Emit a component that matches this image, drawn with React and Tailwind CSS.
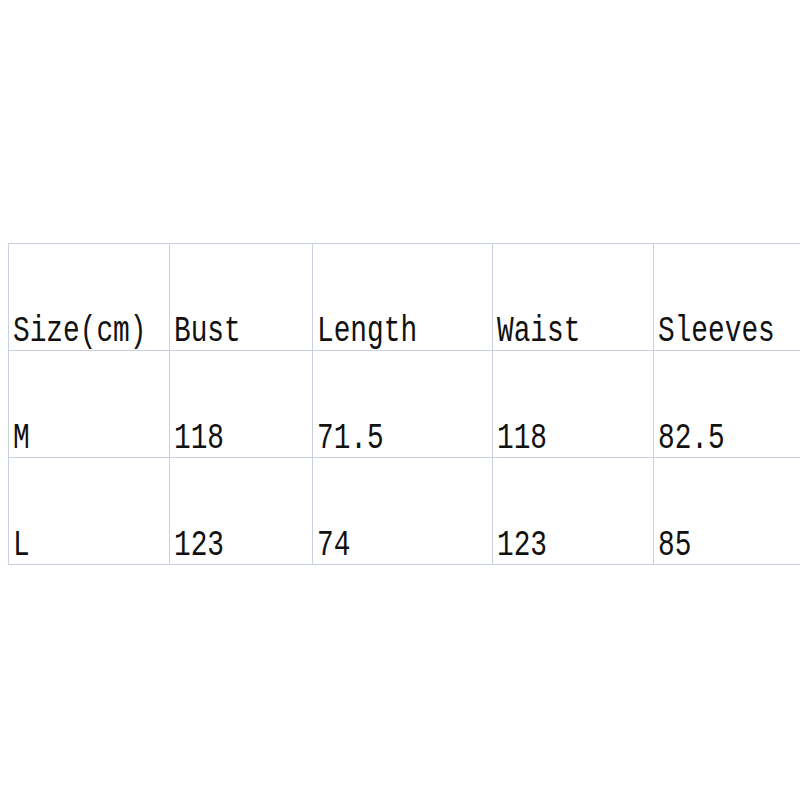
const columns = [161, 143, 180, 161, 160];

const rows = [
    ["Size(cm)", "Bust", "Length", "Waist", "Sleeves"],
    ["M", "118", "71.5", "118", "82.5"],
    ["L", "123", "74", "123", "85"],
];

const Cell = ({ text }) => (
    <td className="border border-[#c8d0e2] align-bottom p-0 pl-[4px]">
        <span className="inline-block origin-bottom translate-y-[1px] scale-y-[1.36] leading-none text-[27.8px] text-[#111]">
            {text}
        </span>
    </td>
);

export default function App() {
    return (
        <div
            className="w-[800px] h-[800px] bg-white overflow-hidden pt-[243px] pl-[8px]"
            style={{ fontFamily: '"Liberation Mono", monospace' }}
        >
            <table className="border-collapse table-fixed w-[805px]">
                <colgroup>
                    {columns.map((w, i) => (
                        <col key={i} style={{ width: w }} />
                    ))}
                </colgroup>
                <tbody>
                    {rows.map((row, i) => (
                        <tr key={i} className="h-[107px]">
                            {row.map((text, j) => (
                                <Cell key={j} text={text} />
                            ))}
                        </tr>
                    ))}
                </tbody>
            </table>
        </div>
    );
}
